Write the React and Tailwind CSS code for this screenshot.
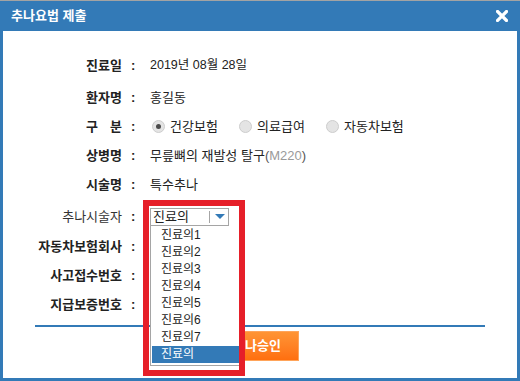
import React from "react";

const Label = ({ children, bold = true }) => (
  <div className={`w-[119px] text-right ${bold ? "font-bold text-[#222]" : "font-normal text-[#333]"}`}>{children}</div>
);

const Colon = () => <div className="w-[28px] pl-[9px] font-bold text-[#222]">:</div>;

const Radio = ({ checked }) => (
  <span className="flex h-[13px] w-[13px] items-center justify-center rounded-full border border-[#cdcdcd] bg-[#e4e4e4]">
    {checked && <span className="h-[5px] w-[5px] rounded-full bg-[#4a4a4a]" />}
  </span>
);

export default function App() {
  const items = ["진료의1", "진료의2", "진료의3", "진료의4", "진료의5", "진료의6", "진료의7"];
  return (
    <div className="flex h-[381px] w-[520px] flex-col font-['Liberation_Sans','Noto_Sans_CJK_KR',sans-serif] text-[13px] text-[#222]">
      <div className="flex h-[31px] items-center justify-between border-t border-[#a3a3a3] bg-[#337ab7] pl-[11px] pr-[12px]">
        <span className="text-[13px] font-bold text-white">추나요법 제출</span>
        <svg width="12" height="12" viewBox="0 0 12 12">
          <path d="M1.5 1.5 L10.5 10.5 M10.5 1.5 L1.5 10.5" stroke="#fff" strokeWidth="3.2" strokeLinecap="square" />
        </svg>
      </div>
      <div className="flex flex-1 flex-col border-x-[3px] border-b-[3px] border-[#337ab7] bg-white pt-[20px]">
        <div className="flex h-[29px] items-center">
          <Label>진료일</Label>
          <Colon />
          <span className="text-[12.5px]">2019년 08월 28일</span>
        </div>
        <div className="mt-[3px] flex h-[29px] items-center">
          <Label>환자명</Label>
          <Colon />
          <span>홍길동</span>
        </div>
        <div className="flex h-[29px] items-center">
          <div className="flex w-[119px] justify-end">
            <span className="flex w-[36px] justify-between font-bold text-[#222]">
              <span>구</span>
              <span>분</span>
            </span>
          </div>
          <Colon />
          <div className="ml-[2px] flex items-center">
            <Radio checked />
            <span className="ml-[5px] w-[69px]">건강보험</span>
            <Radio />
            <span className="ml-[5px] w-[69px]">의료급여</span>
            <Radio />
            <span className="ml-[5px]">자동차보험</span>
          </div>
        </div>
        <div className="flex h-[29px] items-center">
          <Label>상병명</Label>
          <Colon />
          <span>
            무릎뼈의 재발성 탈구<span className="text-[#555]">(</span>
            <span className="text-[#9a9a9a]">M220</span>
            <span className="text-[#555]">)</span>
          </span>
        </div>
        <div className="flex h-[29px] items-center">
          <Label>시술명</Label>
          <Colon />
          <span>특수추나</span>
        </div>
        <div className="relative z-10 mt-[3px] flex h-[29px] items-center">
          <Label bold={false}>추나시술자</Label>
          <Colon />
          <div className="relative">
            <div className="flex h-[18px] w-[79px] items-center border border-[#a5a5a5] bg-white pl-[2px]">
              <span className="w-[56px]">진료의</span>
              <span className="h-[12px] w-px bg-[#a5a5a5]" />
              <svg className="ml-[5px]" width="10" height="5" viewBox="0 0 10 5">
                <path d="M0 0 L10 0 L5 5 Z" fill="#337ab7" />
              </svg>
            </div>
            <div className="absolute left-0 top-[18px] h-[140px] w-[90px] border-b border-l border-[#a5a5a5] bg-white px-px pt-px text-[12px]">
              {items.map((t) => (
                <div key={t} className="flex h-[17px] items-center pl-[9px] text-[#222]">
                  {t}
                </div>
              ))}
              <div className="flex h-[17px] items-center bg-[#337ab7] pl-[9px] text-white">진료의</div>
            </div>
            <div className="pointer-events-none absolute left-[-7px] top-[-8px] h-[176px] w-[102px] border-[6px] border-[#e61f29]" />
          </div>
        </div>
        <div className="mt-[1px] flex h-[29px] items-center">
          <Label>자동차보험회사</Label>
          <Colon />
        </div>
        <div className="flex h-[29px] items-center">
          <Label>사고접수번호</Label>
          <Colon />
        </div>
        <div className="flex h-[29px] items-center">
          <Label>지급보증번호</Label>
          <Colon />
        </div>
        <div className="ml-[32px] mt-[6px] h-[2px] w-[450px] bg-[#337ab7]" />
        <div className="mt-[4px] pl-[212px]">
          <div className="flex h-[30px] w-[84px] items-center justify-center border border-[#ffa45a] bg-gradient-to-b from-[#ff9434] to-[#ff6f0e] text-[13px] font-bold text-white">
            추나승인
          </div>
        </div>
      </div>
    </div>
  );
}
